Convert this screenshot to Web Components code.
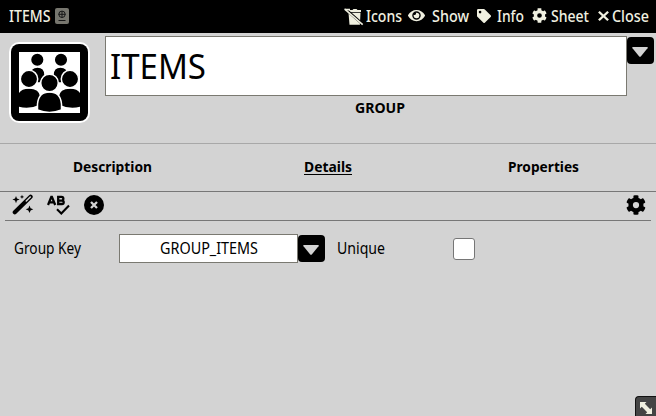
<!DOCTYPE html>
<html lang="en">
<head>
<meta charset="utf-8">
<title>ITEMS</title>
<style>
html,body{margin:0;height:100%;overflow:hidden;background:#d3d3d3}
body{font-family:"Noto Sans","Open Sans",sans-serif;font-size:15.5px;color:#000}
</style>
</head>
<body>
<item-sheet></item-sheet>
<script>
const define = (name, html, ready) => customElements.define(name, class extends HTMLElement {
  connectedCallback() {
    if (this.shadowRoot) return;
    const root = this.attachShadow({ mode: 'open' });
    root.innerHTML = html;
    if (ready) ready(this, root);
  }
});

const GEAR = '<path fill-rule="evenodd" d="M487 316l-43-25c4-23 4-47 0-70l43-25c5-3 7-9 6-14-11-36-30-69-55-96-4-4-10-5-15-2l-43 25c-18-15-39-27-61-35V24c0-6-4-11-9-12-37-8-75-8-110 0-6 1-10 6-10 12v50c-22 8-43 20-61 35L86 84c-5-3-11-2-15 2-25 27-44 60-55 96-2 5 1 11 6 14l43 25c-4 23-4 47 0 70l-43 25c-5 3-8 9-6 14 11 36 30 69 55 96 4 4 10 5 15 2l43-25c18 15 39 27 61 35v50c0 6 4 11 10 12 36 8 74 8 110 0 5-1 9-6 9-12v-50c22-8 43-20 61-35l43 25c5 3 11 2 15-2 25-27 44-60 55-96 1-5-1-11-6-14zM256 336a80 80 0 1 1 0-160 80 80 0 0 1 0 160z"/>';
const ICONS = {
  gear: ['0 0 512 512', GEAR],
  passport: ['0 0 14 16', '<path fill="#77766e" d="M2 0h10a2 2 0 0 1 2 2v12a2 2 0 0 1-2 2H2a2 2 0 0 1-2-2V2a2 2 0 0 1 2-2z"/><g fill="none" stroke="#161616"><circle cx="7" cy="6.3" r="3.2"/><path d="M3.5 6.3h7M7 3v6.5M3.5 12.5h7"/></g>'],
  trash: ['0 0 20 18', '<path d="M4.500 2h4l1-1h3l1 1H17v2H4.500zM4.500 4.800H16.500l-.6 12H5.500z"/><path stroke="#000" stroke-width="2.600" d="M2 1.500l17 15"/><path stroke="currentColor" stroke-width="1.600" d="M.7 1.200l18 15.500"/><path d="M0 .8h6v1.600H2z"/>'],
  eye: ['0 0 576 512', '<path fill-rule="evenodd" d="M572 241C518 135 410 64 288 64S58 135 4 241a32 32 0 0 0 0 30c54 106 162 177 284 177s230-71 284-177a32 32 0 0 0 0-30zM288 400a144 144 0 1 1 0-288 144 144 0 0 1 0 288zm0-240c-9 0-17 1-25 4a48 48 0 0 1-67 67 96 96 0 1 0 92-71z"/>'],
  tag: ['0 0 512 512', '<path fill-rule="evenodd" d="M0 252V48A48 48 0 0 1 48 0h204a48 48 0 0 1 34 14l212 212a48 48 0 0 1 0 68L294 498a48 48 0 0 1-68 0L14 286A48 48 0 0 1 0 252zM112 64a48 48 0 1 0 0 96 48 48 0 0 0 0-96z"/>'],
  close: ['0 0 10 10', '<path stroke="currentColor" stroke-width="2.100" d="M.8.8l8.400 8.400M9.200.8L.8 9.200"/>'],
  wand: ['0 0 22 21', '<path d="M2.800 18.300L18.600 2.700" stroke="currentColor" stroke-width="4.200" stroke-linecap="round"/><path d="M14.300 7l4-4" stroke="#d3d3d3" stroke-width="1.500" stroke-linecap="round"/><path d="M4 2l1 2.600L7.600 5.600 5 6.600 4 9.200 3 6.600.4 5.600 3 4.600zM17.500 11.500l1.100 2.700 2.700 1.100-2.700 1.100-1.100 2.700-1.100-2.700-2.700-1.100 2.700-1.100zM10 .8l.6 1.500 1.500.6-1.500.6L10 5l-.6-1.500L7.900 2.900l1.500-.6z"/>'],
  check: ['0 0 23 20', '<g fill="none" stroke="currentColor" stroke-width="2.300"><path d="M1 10L4.300 1.800h.6L8.200 10M2.400 7.300h4.500M11.200 1.900h3.300a1.800 1.800 0 0 1 0 3.700h-3.300zM11.200 5.600h3.800a1.700 1.700 0 0 1 0 3.400h-3.800z"/><path d="M10 14.200l4.300 4.200 7.700-7.900" stroke-width="2.100"/></g>'],
  clear: ['0 0 20 20', '<circle cx="10" cy="10" r="10"/><path d="M7 7l6 6M13 7l-6 6" stroke="#d3d3d3" stroke-width="2.300"/>'],
  caret: ['0 0 18 12', '<path d="M2 1h14q1.500 0 .5 1.300l-6.500 7.900q-1 1-2 0L1.500 2.300Q.5 1 2 1z"/>'],
  resize: ['0 0 12 12', '<path d="M0 0h6.500L4.800 1.800l5.400 5.400L12 5.500V12H5.500l1.700-1.800-5.400-5.400L0 6.500z"/>'],
  people: ['0 0 81 81', `<rect width="81" height="81" rx="10" fill="#fff"/><rect x="2" y="2" width="77" height="77" rx="8"/><rect x="10" y="10" width="61" height="61" fill="#fff"/>
    <clipPath id="c"><rect x="10" y="10" width="61" height="61"/></clipPath><g clip-path="url(#c)" stroke="#fff" stroke-width="1.500">
    <circle cx="28.300" cy="17.700" r="6.800"/><circle cx="52" cy="17.700" r="6.800"/>
    <path d="M21 33q0-8 7.500-8t7.500 8l-5 8h-5zM44 33q0-8 7.500-8t7.500 8l-6 8h-5z"/>
    <path d="M8 65V55q1-9 12-9t12 9v8q-12 6-24 2zM49 63v-8q1-9 12-9t12 9v10q-12 4-24-2z"/>
    <circle cx="20" cy="37" r="8.700"/><circle cx="61" cy="37" r="8.700"/>
    <path d="M28.500 68V62q1-12 12-12t12 12v6q-12 5-24 0z"/><circle cx="40.500" cy="41" r="8.800"/></g>`]
};

// An icon: name, w and h choose the glyph and its box.
define('ui-icon', '<style>:host{display:block;flex:none}svg{display:block;fill:currentColor}</style>', (el, root) => {
  const [box, body] = ICONS[el.getAttribute('name')];
  root.innerHTML += `<svg viewBox="${box}" width="${el.getAttribute('w')}" height="${el.getAttribute('h')}" preserveAspectRatio="none">${body}</svg>`;
});

// A condensed label: its text is squeezed to the width in w.
define('fit-text', `<style>:host{display:block;flex:none;line-height:20px;white-space:nowrap}
span{display:inline-block;transform-origin:0 50%}</style><span><slot></slot></span>`, (el, root) => {
  const w = +el.getAttribute('w');
  const s = root.querySelector('span');
  el.style.width = w + 'px';
  s.style.transform = `scaleX(${w / s.getBoundingClientRect().width})`;
});

define('drop-button', `<style>:host{display:flex;flex:none;width:27px;height:27px;border-radius:4px;background:#000;color:#d3d3d3;align-items:center;justify-content:center}
ui-icon{padding:2px 1px 0 0}</style><ui-icon name="caret" w="18" h="12"></ui-icon>`);

define('title-bar', `<style>:host{display:flex;height:33px;box-sizing:border-box;background:#000;color:#f0f0e0;padding:0 7px 0 9px;align-items:center;justify-content:space-between;font-weight:500}
div{display:flex;align-items:center;height:32px}
fit-text{padding-bottom:2px}</style>
<div style="gap:4px"><fit-text w="41.500">ITEMS</fit-text><ui-icon name="passport" w="14" h="16" style="margin-top:-2px"></ui-icon></div>
<div><ui-icon name="trash" w="20" h="18"></ui-icon><fit-text w="36" style="margin-left:2px">Icons</fit-text>
<ui-icon name="eye" w="17" h="15" style="margin:-2px 0 0 6px"></ui-icon><fit-text w="37" style="margin-left:7px">Show</fit-text>
<ui-icon name="tag" w="14" h="14" style="margin:-2px 0 0 8px"></ui-icon><fit-text w="27" style="margin-left:6px">Info</fit-text>
<ui-icon name="gear" w="15" h="15" style="margin:-2px 0 0 8px"></ui-icon><fit-text w="38" style="margin-left:4px">Sheet</fit-text>
<ui-icon name="close" w="11" h="10" style="margin:-1px 0 0 9px"></ui-icon><fit-text w="37" style="margin-left:3px">Close</fit-text></div>`);

define('sheet-header', `<style>:host{display:flex;height:111px;box-sizing:border-box;border-bottom:1px solid #a8a8a8;padding:3px 2px 0 9px}
.pic{width:96px;padding-top:6px}
.mid{width:522px}
.name{box-sizing:border-box;height:60px;border:1px solid #7a7971;background:#fff;padding:19px 0 0 4px;font-size:34px}
.kind{display:flex;justify-content:center;padding-top:1px;font-weight:bold;font-size:15px;margin-left:27px}
drop-button{margin-top:1px}</style>
<div class="pic"><ui-icon name="people" w="81" h="81"></ui-icon></div>
<div class="mid"><div class="name"><fit-text w="96">ITEMS</fit-text></div><div class="kind"><fit-text w="50">GROUP</fit-text></div></div>
<drop-button></drop-button>`);

define('tab-bar', `<style>:host{display:grid;grid-template-columns:repeat(3,215.500px);padding:12px 5px 0;height:48px;box-sizing:border-box;border-bottom:1px solid #777;justify-items:center;font-weight:bold;font-size:15px}
u{text-underline-offset:2px}</style>
<fit-text w="79">Description</fit-text><fit-text w="48"><u>Details</u></fit-text><fit-text w="71">Properties</fit-text>`);

define('tool-bar', `<style>:host{display:flex;align-items:flex-start;height:29px;box-sizing:border-box;margin:0 5px;padding:2px 5px 0 7px;border-bottom:1px solid #777}
</style><ui-icon name="wand" w="22" h="21"></ui-icon><ui-icon name="check" w="23" h="20" style="margin:1px 0 0 13px"></ui-icon>
<ui-icon name="clear" w="20" h="20" style="margin:.5px 0 0 14px"></ui-icon><ui-icon name="gear" w="20" h="20" style="margin:.5px 0 0 auto"></ui-icon>`);

define('detail-form', `<style>:host{display:flex;align-items:center;padding:13px 0 0 14px;height:29px}
fit-text{margin-top:-1px}
.key{width:179px;height:29px;box-sizing:border-box;border:1px solid #7a7971;background:#fff;display:flex;align-items:center;justify-content:center;margin-left:38px}
.box{box-sizing:border-box;width:22px;height:22px;border:1px solid #767676;border-radius:3px;background:#fff;margin-left:68px;margin-top:1px}</style>
<fit-text w="67">Group Key</fit-text><div class="key"><fit-text w="98">GROUP_ITEMS</fit-text></div><drop-button></drop-button>
<fit-text w="48" style="margin-left:12px">Unique</fit-text><div class="box"></div>`);

define('item-sheet', `<style>:host{display:block;position:relative;height:416px;background:#d3d3d3}
.grip{position:absolute;right:0;bottom:0;width:21px;height:20px;box-sizing:border-box;padding:5px 0 0 4px;background:#444;border:solid #111;border-width:1px 0 0 1px;border-radius:4px 0 0 0;color:#f0f0e0}</style>
<title-bar></title-bar><sheet-header></sheet-header><tab-bar></tab-bar><tool-bar></tool-bar><detail-form></detail-form>
<div class="grip"><ui-icon name="resize" w="12" h="12"></ui-icon></div>`);
</script>
</body>
</html>
